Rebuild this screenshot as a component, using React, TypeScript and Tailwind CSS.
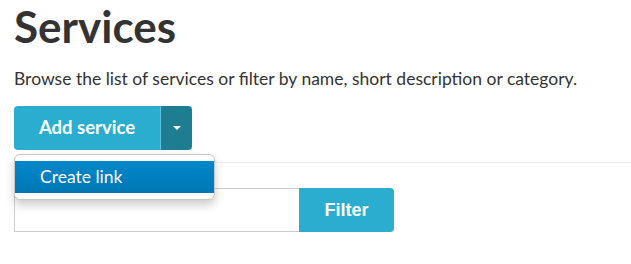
import { useState } from "react";

export default function App() {
  const [query, setQuery] = useState("");

  return (
    <main className="min-h-[264px] bg-white pl-[14px] text-[#333] [font-family:Lato,'Noto_Sans',sans-serif]">
      <h1 className="pt-[2px] text-[44px] font-bold leading-[48px]">Services</h1>
      <p className="mt-[17px] text-[17.5px] leading-[24px]">
        Browse the list of services or filter by name, short description or category.
      </p>

      {/* Add service split button */}
      <div className="relative mt-[15px] flex">
        <button className="h-[44px] w-[146px] rounded-l-[4px] bg-[#2aadce] text-[18.5px] font-bold text-white">
          Add service
        </button>
        <button className="flex h-[44px] w-[32px] items-center justify-center rounded-r-[4px] border-l border-[#5fc3dc] bg-[#1f7d92]">
          <span className="block h-0 w-0 border-x-[4px] border-t-[4px] border-x-transparent border-t-white" />
        </button>

        <div className="absolute left-0 top-[48px] z-10 w-[201px] rounded-[6px] border border-[#c8c8c8] bg-white pb-[6px] pt-[6px] shadow-[0_5px_10px_rgba(0,0,0,0.2)]">
          <a className="block h-[32px] bg-gradient-to-b from-[#0088cc] to-[#0077b3] pl-[25px] text-[17.5px] leading-[32px] text-white">
            Create link
          </a>
        </div>
      </div>

      <hr className="mt-[12px] border-t border-[#eeeeee]" />

      {/* Filter */}
      <div className="mt-[25px] flex">
        <input
          value={query}
          onChange={(e) => setQuery(e.target.value)}
          className="h-[44px] w-[285px] border border-r-0 border-[#cccccc] px-3 text-[16px] outline-none"
        />
        <button className="h-[44px] w-[95px] rounded-r-[4px] bg-[#2aadce] text-[18px] font-bold text-white [font-family:'Liberation_Sans',Arial,sans-serif]">
          Filter
        </button>
      </div>
    </main>
  );
}
